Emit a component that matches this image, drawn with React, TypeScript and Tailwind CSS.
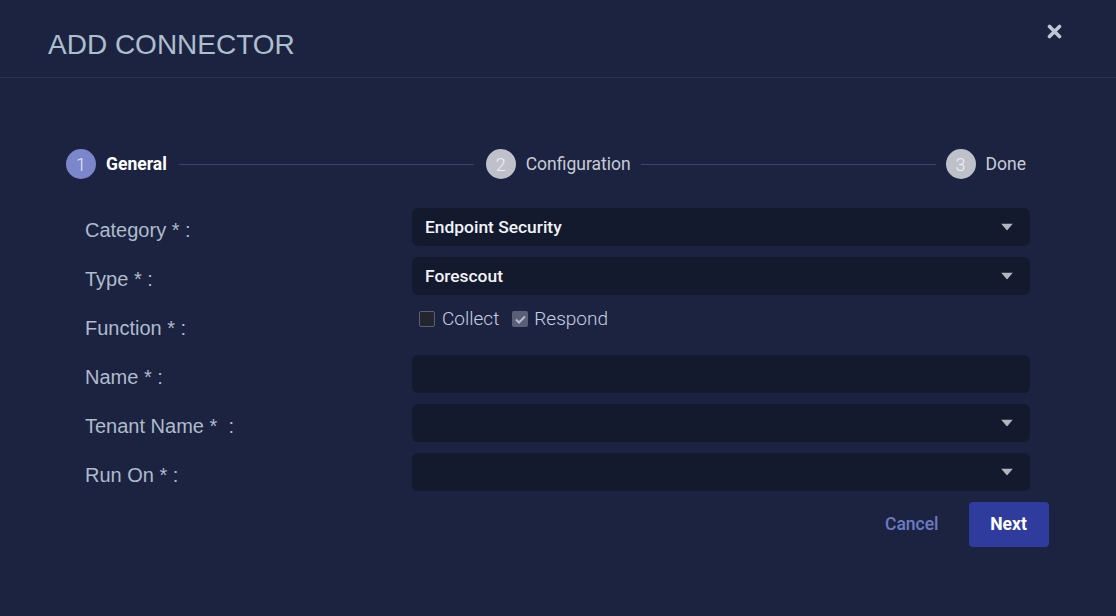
import React from "react";

const Caret = () => (
  <svg width="12" height="7" viewBox="0 0 12 7" className="absolute right-[17px] top-1/2 -translate-y-1/2">
    <path d="M0 0 L12 0 L6 7 Z" fill="#b4b6bf" />
  </svg>
);

const Select = ({ value }: { value?: string }) => (
  <div className="relative h-[38px] w-[618px] rounded-[6px] bg-[#141a2d] flex items-center pl-[13px] text-[17.4px] font-medium text-[#f2f4f8]" style={{ fontFamily: "Roboto, sans-serif" }}>
    {value}
    <Caret />
  </div>
);

const Label = ({ children }: { children: React.ReactNode }) => (
  <div className="w-[327px] pt-[10px] text-[20px] text-[#aebccb] leading-[24px] whitespace-pre" style={{ fontFamily: '"Liberation Sans", Arial, sans-serif' }}>
    {children}
  </div>
);

export default function App() {
  return (
    <div className="w-[1116px] h-[616px] bg-[#1c2341] relative overflow-hidden">
      <div className="h-[78px] border-b border-[#2c3352] pl-[48px] pt-[29px]">
        <div className="text-[28px] leading-[32px] text-[#adbfcd]" style={{ fontFamily: '"Liberation Sans", Arial, sans-serif' }}>
          ADD CONNECTOR
        </div>
      </div>
      <svg className="absolute left-[1047px] top-[24px]" width="15" height="15" viewBox="0 0 15 15">
        <path d="M2.5 2.5 L12.5 12.5 M12.5 2.5 L2.5 12.5" stroke="#bcc8d4" strokeWidth="3.6" strokeLinecap="round" />
      </svg>

      <div className="mt-[71px] ml-[66px] w-[960px] flex items-center" style={{ fontFamily: "Roboto, sans-serif" }}>
        <div className="w-[30px] h-[30px] rounded-full bg-[#7b86cb] flex items-center justify-center text-[18px] font-light text-[#e8eaf5]">1</div>
        <div className="ml-[10px] text-[17.5px] font-bold text-white">General</div>
        <div className="flex-1 h-px bg-[#3d4466] mx-[12px]" />
        <div className="w-[30px] h-[30px] rounded-full bg-[#bfc1ca] flex items-center justify-center text-[18px] font-light text-[#f0f0f4]">2</div>
        <div className="ml-[10px] text-[17.5px] text-[#c9ccd5]">Configuration</div>
        <div className="flex-1 h-px bg-[#3d4466] mx-[10px]" />
        <div className="w-[30px] h-[30px] rounded-full bg-[#bfc1ca] flex items-center justify-center text-[18px] font-light text-[#f0f0f4]">3</div>
        <div className="ml-[10px] text-[17.5px] text-[#c9ccd5]">Done</div>
      </div>

      <div className="ml-[85px] mt-[29px] flex flex-col gap-[11px]">
        <div className="flex"><Label>Category * :</Label><Select value="Endpoint Security" /></div>
        <div className="flex"><Label>Type * :</Label><Select value="Forescout" /></div>
        <div className="flex h-[38px]">
          <Label>Function * :</Label>
          <div className="flex items-start pt-[1px] text-[19px] text-[#c7d0e0] leading-[24px]" style={{ fontFamily: "Roboto, sans-serif" }}>
            <div className="ml-[7px] mt-[4px] w-[16px] h-[16px] rounded-[2px] border border-[#5b5f70] bg-[#24262f]" />
            <span className="ml-[7px] font-light">Collect</span>
            <div className="ml-[13px] mt-[4px] w-[16px] h-[16px] rounded-[2px] bg-[#5a5e76] flex items-center justify-center">
              <svg width="11" height="9" viewBox="0 0 11 9"><path d="M1 4.5 L4 7.5 L10 1.5" stroke="#b7bccb" strokeWidth="2" fill="none" /></svg>
            </div>
            <span className="ml-[6px] font-light">Respond</span>
          </div>
        </div>
        <div className="flex"><Label>Name * :</Label><div className="h-[38px] w-[618px] rounded-[6px] bg-[#141a2d]" /></div>
        <div className="flex"><Label>{"Tenant Name *  :"}</Label><Select /></div>
        <div className="flex"><Label>Run On * :</Label><Select /></div>
      </div>

      <div className="mt-[11px] ml-[885px] flex items-center" style={{ fontFamily: "Roboto, sans-serif" }}>
        <div className="text-[17.5px] font-medium text-[#6b7bc2]">Cancel</div>
        <div className="ml-[30px] w-[80px] h-[45px] rounded-[4px] bg-[#2f3c9e] flex items-center justify-center text-[17.5px] font-bold text-white">Next</div>
      </div>
    </div>
  );
}
